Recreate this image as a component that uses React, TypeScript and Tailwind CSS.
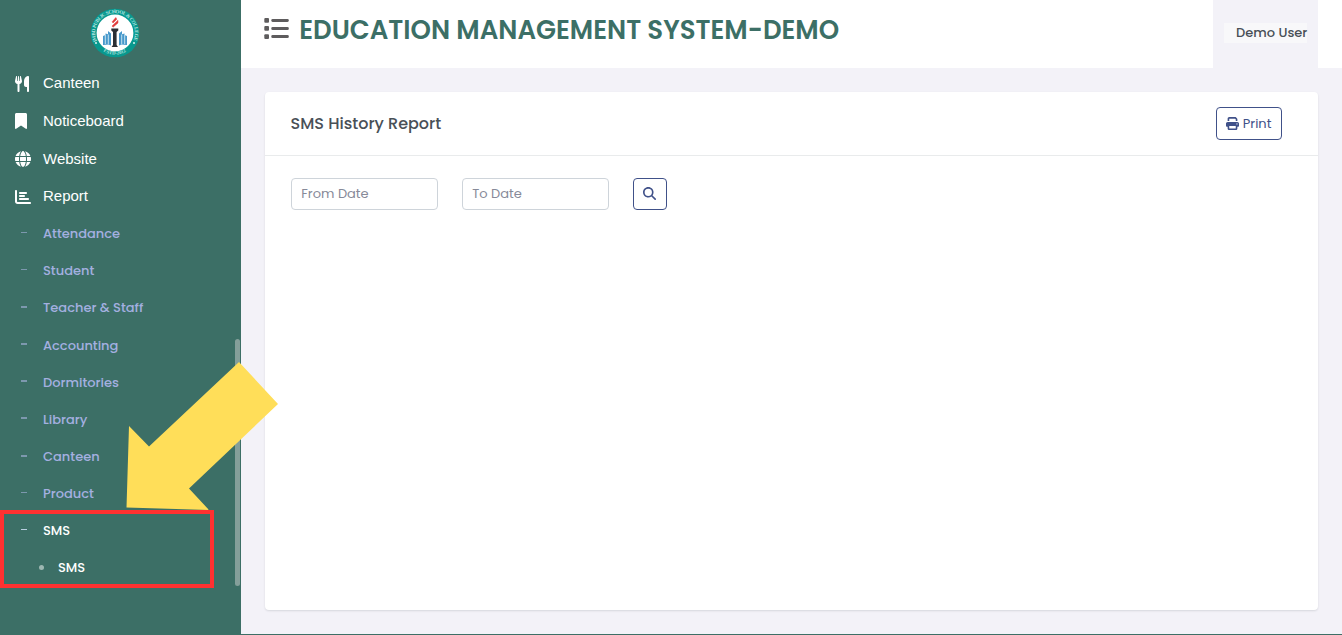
import { FaUtensils, FaBookmark, FaGlobe, FaChartBar, FaPrint, FaMagnifyingGlass } from "react-icons/fa6";

const mainItems = [
  { label: "Canteen", Icon: FaUtensils, width: "w-[14px]" },
  { label: "Noticeboard", Icon: FaBookmark, width: "w-[12px]" },
  { label: "Website", Icon: FaGlobe, width: "w-[16px]" },
  { label: "Report", Icon: FaChartBar, width: "w-[16px]" },
];

const subItems = [
  { label: "Attendance", dash: "h-px" },
  { label: "Student", dash: "h-px" },
  { label: "Teacher & Staff", dash: "h-[2px]" },
  { label: "Accounting", dash: "h-[2px]" },
  { label: "Dormitories", dash: "h-[2px]" },
  { label: "Library", dash: "h-[2px]" },
  { label: "Canteen", dash: "h-[2px]" },
  { label: "Product", dash: "h-px" },
];

function Logo() {
  return (
    <svg viewBox="0 0 50 50" className="h-[50px] w-[50px]" role="img">
      <defs>
        <path id="ring" d="M 6.9 33.2 A 19.9 19.9 0 1 1 43.1 33.2" />
        <path id="ringBottom" d="M 11 41.6 A 21.8 21.8 0 0 0 39 41.6" />
      </defs>
      <circle cx="25" cy="25" r="24.3" fill="#08988e" />
      <circle cx="25" cy="25" r="18.4" fill="#fff" />
      <text fill="#b9e5e0" fontSize="5" fontWeight="700" fontFamily="Liberation Serif">
        <textPath href="#ring" textLength="78">IMBD PUBLIC SCHOOL &amp; COLLEGE</textPath>
      </text>
      <text fill="#b9e5e0" fontSize="4.8" fontWeight="700" fontFamily="Liberation Serif">
        <textPath href="#ringBottom" startOffset="3">ESTD-2012</textPath>
      </text>
      <circle cx="6" cy="35" r="1" fill="#d5f3ee" />
      <circle cx="44" cy="35" r="1" fill="#d5f3ee" />
      <path d="M13 28l2.500-1v-1.500l2.500.8v-3.300l3 2.500v12l-2.500-1-5.500.5zM37 28l-2.500-1v-1.500l-2.500.8v-3.300l-3 2.500v12l2.500-1 5.500.5z" fill="#4798cb" />
      <path d="M15.300 27v9M18.300 26.500v9.500M31.700 26.500v9.500M34.700 27v9" stroke="#d3eaf4" strokeWidth="0.9" />
      <path d="M21.300 20.500h7v2l-1.700 1.400V37l1.400 2h-6.400l1.400-2V23.900l-1.700-1.400z" fill="#2b2f35" />
      <path d="M25.800 9.500l-3.600 4.300.8 1.200 3.800-3.800zM28 12.300l-6 5.700 1 1.200 5-4.200z" fill="#e03c3c" stroke="#e03c3c" strokeWidth="0.5" />
    </svg>
  );
}

function MenuIcon() {
  return (
    <svg viewBox="0 0 25 21" className="mt-[18px] h-[21px] w-[25px]" fill="#5e5c5d">
      <rect x="0.300" y="0" width="4.700" height="4.700" rx="1" />
      <rect x="0.300" y="8.100" width="4.700" height="4.700" rx="1" />
      <rect x="0.300" y="16.200" width="4.700" height="4.700" rx="1" />
      <rect x="7.300" y="0.900" width="17.500" height="3" rx="1.300" />
      <rect x="7.300" y="9" width="17.500" height="3" rx="1.300" />
      <rect x="7.300" y="17" width="17.500" height="3" rx="1.300" />
    </svg>
  );
}

function Sidebar() {
  return (
    <aside className="relative h-[635px] w-[241px] shrink-0 bg-[#3c6f66]">
      <div className="flex h-[64.800px] justify-center pt-[8px] pr-[11px]">
        <Logo />
      </div>
      <nav>
        {mainItems.map(({ label, Icon, width }) => (
          <a key={label} className="flex h-[37.650px] items-center pl-[15px] text-[15px] text-white">
            <span className="w-[28px]">
              <Icon className={`h-[16px] ${width}`} preserveAspectRatio="none" />
            </span>
            <span className="font-['Liberation_Sans',sans-serif]">{label}</span>
          </a>
        ))}
        {subItems.map(({ label, dash }) => (
          <a key={label} className="flex h-[37.150px] items-center pl-[21px] text-[13px] font-medium text-[#a4b0e0]">
            <span className={`mr-[16px] mb-[2.400px] w-[6px] bg-[#7d98ae] ${dash}`} />
            <span>{label}</span>
          </a>
        ))}
        <a className="flex h-[37.120px] items-center pl-[21px] text-[13px] font-medium text-white">
          <span className="mr-[16px] mb-[2.400px] h-px w-[6px] bg-[#b9cfe0]" />
          SMS
        </a>
        <a className="flex h-[37.120px] items-center pl-[39px] text-[13px] font-medium text-white">
          <span className="mr-[14px] mb-[1px] h-[5px] w-[5px] rounded-full bg-[#9db7b2]" />
          SMS
        </a>
      </nav>
      <div className="absolute top-[339px] left-[235px] h-[247px] w-[5px] rounded-full bg-[#849f9a]" />
    </aside>
  );
}

export default function App() {
  return (
    <div className="relative flex h-[635px] w-[1342px] overflow-hidden bg-[#f3f2f8] font-['Poppins',sans-serif]">
      <Sidebar />
      <div className="flex min-w-0 flex-1 flex-col border-b border-[#3c6f66]">
        <header className="flex h-[68px] shrink-0 bg-white pr-[24px] pl-[23px]">
          <MenuIcon />
          <h1 className="ml-[10.200px] flex-1 pt-[10px] text-[26px] leading-[40px] font-semibold whitespace-nowrap text-[#3c6f66]">
            EDUCATION MANAGEMENT SYSTEM-DEMO
          </h1>
          <div className="h-[68px] w-[105px] bg-[#f3f2f8] pt-[23px] pl-[11px]">
            <div className="h-[20px] w-[83px] bg-[#f8f8fa] pl-[12px] text-[13px] leading-[20px] font-medium whitespace-nowrap text-[#495057]">
              Demo User
            </div>
          </div>
        </header>
        <main className="mt-[24px] mr-[24px] ml-[24px] h-[518px] rounded-[4px] bg-white shadow-[0_1px_2px_rgba(56,65,74,0.15)]">
          <div className="flex h-[64px] items-center justify-between border-b border-[#e9ebec] pr-[36px] pl-[25.600px]">
            <h2 className="text-[16px] font-medium text-[#495057]">SMS History Report</h2>
            <button className="flex h-[33px] w-[66px] items-center rounded-[4px] border border-[#405189] pl-[9px] text-[13px] text-[#405189]">
              <FaPrint className="mr-[3.800px] h-[13px] w-[13px]" />
              <span>Print</span>
            </button>
          </div>
          <div className="flex gap-[24px] pt-[22px] pl-[26px]">
            <input
              placeholder="From Date"
              className="h-[32px] w-[147px] rounded-[4px] border border-[#ced4da] px-[9.300px] text-[13px] placeholder:text-[#878a99]"
            />
            <input
              placeholder="To Date"
              className="h-[32px] w-[147px] rounded-[4px] border border-[#ced4da] px-[9.300px] text-[13px] placeholder:text-[#878a99]"
            />
            <button className="flex h-[32px] w-[34px] items-center justify-center rounded-[4px] border border-[#405189] pb-[2px] text-[#405189]">
              <FaMagnifyingGlass className="mr-[1px] h-[13px] w-[13px]" />
            </button>
          </div>
        </main>
      </div>
      <svg className="absolute top-[361px] left-[126px] h-[150px] w-[153px]" viewBox="126 361 153 150">
        <path d="M239 362L278 404L189 488.500L209 510L126.500 507.500L129 426L149 446.500Z" fill="#ffde59" />
      </svg>
      <div className="absolute top-[509.500px] left-0 h-[78px] w-[214px] border-4 border-[#ff3131]" />
    </div>
  );
}
